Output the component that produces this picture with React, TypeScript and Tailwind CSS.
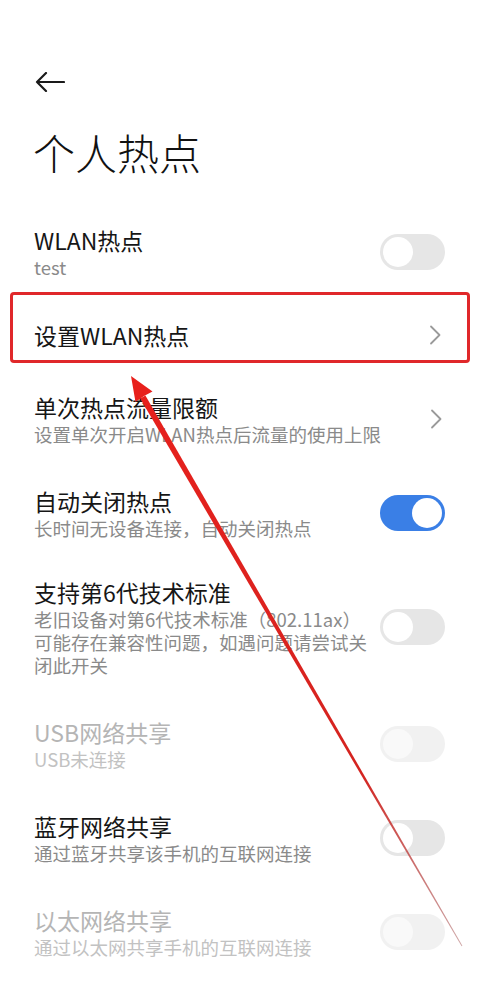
import React from 'react';

type Control = 'on' | 'off' | 'chevron';

function Toggle({ on, disabled }: { on: boolean; disabled?: boolean }) {
  const track = on ? 'bg-[#3a7fe6] justify-end' : disabled ? 'bg-[#f1f1f1] justify-start' : 'bg-[#e6e6e6] justify-start';
  const knob = disabled ? 'bg-[#f9f9f9]' : 'bg-white';
  return (
    <div className={`flex items-center w-[65px] h-[36px] rounded-full px-[3px] shrink-0 ${track}`}>
      <div className={`w-[30px] h-[30px] rounded-full ${knob}`} />
    </div>
  );
}

function Chevron() {
  return (
    <svg width="14" height="20" viewBox="0 0 14 20" className="shrink-0 mr-[1px]">
      <path d="M2 1.5 L10.5 10 L2 18.5" fill="none" stroke="#9a9a9a" strokeWidth="1.8" strokeLinecap="round" strokeLinejoin="round" />
    </svg>
  );
}

function Row({ title, sub, control, disabled, className = '' }: { title: string; sub?: string[]; control: Control; disabled?: boolean; className?: string }) {
  return (
    <div className={`flex items-center justify-between pl-[34px] pr-[35px] py-[20px] ${className}`}>
      <div className="flex flex-col">
        <div className={`text-[23px] leading-[30px] ${disabled ? 'text-[#b5b5b5]' : 'text-[#161616]'}`}>{title}</div>
        {sub && (
          <div className={`text-[18.5px] leading-[23px] mt-[1px] ${disabled ? 'text-[#c2c2c2]' : 'text-[#8a8a8a]'}`}>
            {sub.map((s) => (
              <div key={s}>{s}</div>
            ))}
          </div>
        )}
      </div>
      {control === 'chevron' ? <Chevron /> : <Toggle on={control === 'on'} disabled={disabled} />}
    </div>
  );
}

export default function App() {
  // tapered annotation line: tip (131,376) -> end (462,946)
  const line = '140.2,398.6 145.4,395.6 462.4,945.8 461.6,946.2';
  return (
    <div className="relative w-[480px] min-h-[1004px] bg-white overflow-hidden font-['Noto_Sans_CJK_SC','Noto_Sans',sans-serif]">
      <div className="pl-[35px] pt-[72px]">
        <svg width="30" height="20" viewBox="0 0 30 20">
          <path d="M29 10 H2 M11 1 L2 10 L11 19" fill="none" stroke="#1a1a1a" strokeWidth="2.2" strokeLinecap="round" strokeLinejoin="round" />
        </svg>
      </div>
      <h1 className="pl-[33px] mt-[32px] text-[42px] leading-[56px] font-light text-[#111]">个人热点</h1>

      <Row title="WLAN热点" sub={['test']} control="off" className="mt-[25px] !pb-[13px]" />

      <div className="mx-[10px] border-[3px] border-[#e0282a] rounded-[4px] flex items-center justify-between pl-[21px] pr-[23px] pt-[25px] pb-[10px]">
        <div className="text-[23px] leading-[30px] text-[#161616]">设置WLAN热点</div>
        <Chevron />
      </div>

      <Row title="单次热点流量限额" sub={['设置单次开启WLAN热点后流量的使用上限']} control="chevron" className="mt-[9px]" />
      <Row title="自动关闭热点" sub={['长时间无设备连接，自动关闭热点']} control="on" />
      <Row title="支持第6代技术标准" sub={['老旧设备对第6代技术标准（802.11ax）', '可能存在兼容性问题，如遇问题请尝试关', '闭此开关']} control="off" className="!pt-[17px]" />
      <Row title="USB网络共享" sub={['USB未连接']} control="off" disabled />
      <Row title="蓝牙网络共享" sub={['通过蓝牙共享该手机的互联网连接']} control="off" />
      <Row title="以太网络共享" sub={['通过以太网共享手机的互联网连接']} control="off" disabled />

      <svg className="absolute inset-0 pointer-events-none" width="480" height="1004" viewBox="0 0 480 1004">
        <defs>
          <linearGradient id="fade" x1="131" y1="376" x2="462" y2="946" gradientUnits="userSpaceOnUse">
            <stop offset="0" stopColor="#e8201c" />
            <stop offset="0.7" stopColor="#d42420" />
            <stop offset="1" stopColor="#a05050" stopOpacity="0.5" />
          </linearGradient>
        </defs>
        <polygon points={line} fill="url(#fade)" />
        <polygon points="131,376 152.5,391.5 144,396 135.5,402" fill="#e8201c" />
      </svg>
    </div>
  );
}
